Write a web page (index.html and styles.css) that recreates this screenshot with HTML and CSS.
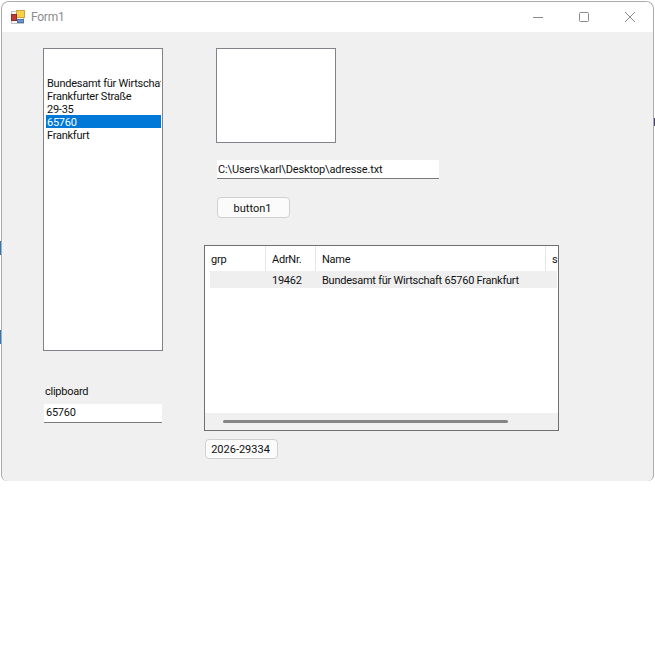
FILE: index.html
```html
<!DOCTYPE html>
<html lang="en">
<head>
  <meta charset="UTF-8" />
  <title>Form1</title>
  <link rel="stylesheet" href="styles.css">
</head>
<body>

  <!-- bits of the desktop showing past the window edge -->
  <div class="sliver sliver-blue-1"></div>
  <div class="sliver sliver-blue-2"></div>
  <div class="sliver sliver-dark"></div>

  <div class="window">
    <div class="titlebar">
      <svg class="app-icon" width="14" height="14" viewBox="0 0 14 14">
        <rect x="0.5" y="1.5" width="12" height="12" fill="#f6f6f6" stroke="#c4c4c4"/>
        <rect x="5.5" y="0.5" width="8" height="7" fill="#f7cf4a" stroke="#cfa437"/>
        <rect x="0.5" y="4.5" width="5" height="6" fill="#c23a30" stroke="#86312b"/>
        <rect x="6.5" y="9.5" width="6" height="3" fill="#6a93cc" stroke="#4b76b0"/>
      </svg>
      <span class="title">Form1</span>
      <div class="caption-buttons">
        <svg width="12" height="12" viewBox="0 0 12 12"><path d="M1 6.5h10" stroke="#8a8a8a" fill="none"/></svg>
        <svg width="12" height="12" viewBox="0 0 12 12"><rect x="1.5" y="1.5" width="9" height="9" rx="1" stroke="#8a8a8a" fill="none"/></svg>
        <svg width="12" height="12" viewBox="0 0 12 12"><path d="M1 1l10 10M11 1L1 11" stroke="#8a8a8a" fill="none"/></svg>
      </div>
    </div>

    <div class="client">
      <div class="left-col">
        <ul class="listbox">
          <li></li>
          <li></li>
          <li>Bundesamt für Wirtschaft</li>
          <li>Frankfurter Straße</li>
          <li>29-35</li>
          <li class="selected">65760</li>
          <li>Frankfurt</li>
        </ul>
        <label class="label">clipboard</label>
        <div class="textbox clip-box">65760</div>
      </div>

      <div class="right-col">
        <div class="picture"></div>
        <div class="textbox path-box">C:\Users\karl\Desktop\adresse.txt</div>
        <button class="button button-main">button1</button>

        <div class="grid">
          <div class="grid-head">
            <div class="col col-grp">grp</div>
            <div class="col col-nr">AdrNr.</div>
            <div class="col col-name">Name</div>
            <div class="col col-s">s</div>
          </div>
          <div class="grid-row">
            <div class="col col-grp"></div>
            <div class="col col-nr">19462</div>
            <div class="col col-name">Bundesamt für Wirtschaft 65760 Frankfurt</div>
          </div>
          <div class="grid-empty"></div>
          <div class="hscroll"><div class="hscroll-thumb"></div></div>
        </div>

        <button class="button button-count">2026-29334</button>
      </div>
    </div>
  </div>

</body>
</html>
```

FILE: styles.css
```css
body {
  margin: 0;
  background: #fff;
  font-family: Roboto, 'Liberation Sans', sans-serif;
  font-size: 11px;
  letter-spacing: -0.25px;
  color: #111;
}

.sliver {
  position: absolute;
  width: 1px;
}

.sliver-blue-1 {
  left: 0;
  top: 241px;
  height: 14px;
  background: #2a78c4;
}

.sliver-blue-2 {
  left: 0;
  top: 330px;
  height: 14px;
  background: #2a78c4;
}

.sliver-dark {
  left: 654px;
  top: 118px;
  height: 8px;
  background: #4a4468;
}

.window {
  width: 653px;
  height: 480px;
  margin: 1px 0 0 1px;
  box-sizing: border-box;
  background: #f0f0f0;
  border: 1px solid #ababab;
  border-bottom: none;
  border-radius: 8px 8px 6px 6px;
  overflow: hidden;
  display: flex;
  flex-direction: column;
}

.titlebar {
  height: 30px;
  flex: none;
  background: #fff;
  display: flex;
  align-items: center;
  padding-left: 9px;
}

.app-icon {
  margin-right: 6px;
}

.title {
  color: #8c8c8c;
  font-size: 12px;
}

.caption-buttons {
  margin-left: auto;
  display: flex;
  gap: 34px;
  padding-right: 17px;
}

.client {
  flex: 1;
  display: flex;
  padding: 16px 0 0 41px;
}

.left-col {
  width: 120px;
  margin-right: 41px;
}

.listbox {
  list-style: none;
  margin: 0;
  padding: 1px 1px 0 2px;
  width: 120px;
  height: 303px;
  box-sizing: border-box;
  background: #fff;
  border: 1px solid #82828a;
  overflow: hidden;
}

.listbox li {
  height: 13px;
  line-height: 15px;
  padding-left: 1px;
  white-space: nowrap;
  overflow: hidden;
}

.listbox .selected {
  background: #0078d7;
  color: #fff;
}

.label {
  display: block;
  margin: 33px 0 0 2px;
  height: 14px;
  line-height: 16px;
}

.textbox {
  background: #fff;
  border-bottom: 1px solid #7a7a7a;
  box-sizing: border-box;
  height: 19px;
  line-height: 18px;
  padding-left: 2px;
}

.clip-box {
  width: 118px;
  margin: 6px 0 0 1px;
}

.right-col {
  width: 360px;
  display: flex;
  flex-direction: column;
  align-items: flex-start;
}

.picture {
  width: 120px;
  height: 95px;
  box-sizing: border-box;
  margin-left: 12px;
  background: #fff;
  border: 1px solid #82828a;
}

.path-box {
  width: 222px;
  margin: 17px 0 0 13px;
  padding-left: 1px;
  line-height: 20px;
  letter-spacing: -0.12px;
}

.button {
  font: inherit;
  color: #111;
  padding: 0 2px 0 0;
  background: #fbfbfb;
  border: 1px solid #d0d0d0;
  border-radius: 4px;
}

.button-main {
  width: 73px;
  height: 21px;
  margin: 18px 0 0 13px;
  padding-top: 2px;
}

.grid {
  width: 355px;
  height: 186px;
  box-sizing: border-box;
  margin-top: 27px;
  background: #fff;
  border: 1px solid #6f6f6f;
  display: flex;
  flex-direction: column;
  overflow: hidden;
}

.grid-head {
  height: 25px;
  flex: none;
  display: flex;
  line-height: 27px;
}

.grid-head .col {
  border-right: 1px solid #e6e6e6;
}

.grid-head .col-s {
  border-right: none;
}

.grid-row {
  height: 17px;
  flex: none;
  margin: 0 1px 0 5px;
  display: flex;
  line-height: 19px;
  background: #efefef;
}

.col {
  box-sizing: border-box;
  flex: none;
  padding-left: 6px;
  white-space: nowrap;
}

.grid-head .col-grp { width: 61px; }
.grid-row .col-grp { width: 56px; }
.col-nr { width: 50px; }
.col-name { width: 230px; }
.col-s { width: 12px; }

.grid-empty {
  flex: 1;
}

.hscroll {
  height: 17px;
  flex: none;
  background: #f0f0f0;
  padding: 7px 0 0 18px;
  box-sizing: border-box;
}

.hscroll-thumb {
  width: 285px;
  height: 3px;
  border-radius: 2px;
  background: #858585;
}

.button-count {
  width: 73px;
  height: 20px;
  margin: 8px 0 0 1px;
}
```
